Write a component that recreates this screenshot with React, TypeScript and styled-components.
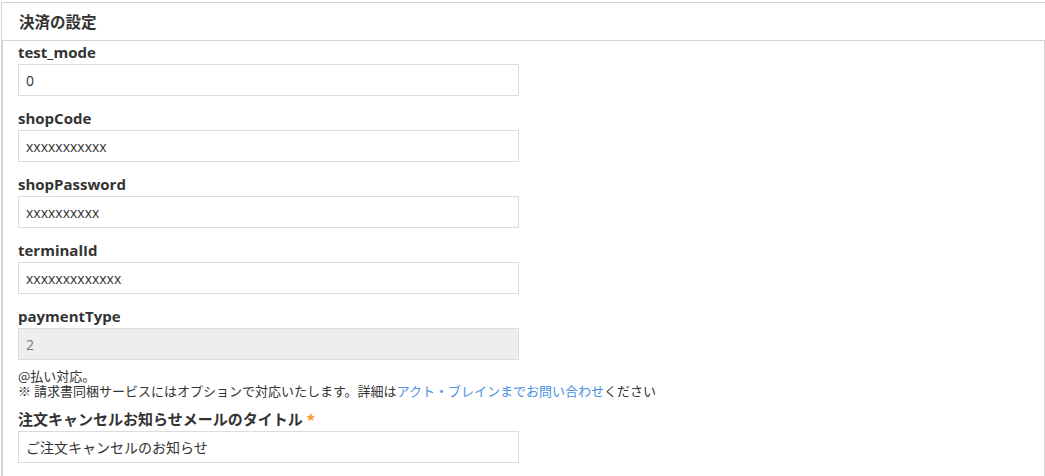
import React from "react";
import styled, { createGlobalStyle } from "styled-components";

const Global = createGlobalStyle`
  html, body { margin: 0; padding: 0; background: #fff; }
  body {
    font-family: "Open Sans", "Noto Sans CJK JP", sans-serif;
    color: #333;
  }
`;

const Panel = styled.section`
  margin: 2px 0 0 1px;
  width: 1044px;
`;

const PanelHeader = styled.h2`
  margin: 0;
  height: 38px;
  box-sizing: border-box;
  border-top: 1px solid #d4d4d4;
  border-left: 1px solid #d4d4d4;
  padding: 0 0 1px 17px;
  display: flex;
  align-items: center;
  font-size: 15.5px;
  font-weight: 700;
  color: #333;
  font-family: "Noto Sans CJK JP", sans-serif;
`;

const PanelBody = styled.div`
  border: 1px solid #d4d4d4;
  border-left-width: 2px;
  border-bottom: none;
  padding: 1px 16px 12px 15px;
`;

const Field = styled.div`
  margin-bottom: 12px;
`;

const Label = styled.label`
  display: block;
  height: 20px;
  line-height: 20px;
  margin-bottom: 2px;
  font-size: 15px;
  font-weight: 700;
  color: #333;
  font-family: "Open Sans", "Noto Sans CJK JP", sans-serif;
`;

const Required = styled.span`
  color: #f7941d;
  margin-left: 4px;
`;

const Input = styled.input`
  display: block;
  box-sizing: border-box;
  width: 501px;
  height: 32px;
  margin: 0;
  padding: 0 7px;
  border: 1px solid #dcdcdc;
  border-radius: 0;
  background: #fff;
  color: #333;
  font-size: 14px;
  font-family: "Open Sans", "Noto Sans CJK JP", sans-serif;
  outline: none;
  &:disabled {
    background: #eee;
    color: #777;
  }
`;

const Help = styled.div`
  margin: -4px 0 11px;
  font-size: 13px;
  line-height: 15px;
  color: #333;
  font-family: "Noto Sans CJK JP", sans-serif;
`;

const Link = styled.a`
  color: #4a90e2;
  text-decoration: none;
`;

const fields = [
  { name: "test_mode", value: "0" },
  { name: "shopCode", value: "xxxxxxxxxxx" },
  { name: "shopPassword", value: "xxxxxxxxxx" },
  { name: "terminalId", value: "xxxxxxxxxxxxx" },
];

export default function App() {
  return (
    <>
      <Global />
      <Panel>
        <PanelHeader>決済の設定</PanelHeader>
        <PanelBody>
          {fields.map((f) => (
            <Field key={f.name}>
              <Label>{f.name}</Label>
              <Input defaultValue={f.value} />
            </Field>
          ))}
          <Field>
            <Label>paymentType</Label>
            <Input defaultValue="2" disabled />
          </Field>
          <Help>
            @払い対応。
            <br />※ 請求書同梱サービスにはオプションで対応いたします。詳細は
            <Link href="#">アクト・ブレインまでお問い合わせ</Link>ください
          </Help>
          <Field>
            <Label>
              注文キャンセルお知らせメールのタイトル<Required>*</Required>
            </Label>
            <Input defaultValue="ご注文キャンセルのお知らせ" />
          </Field>
        </PanelBody>
      </Panel>
    </>
  );
}
